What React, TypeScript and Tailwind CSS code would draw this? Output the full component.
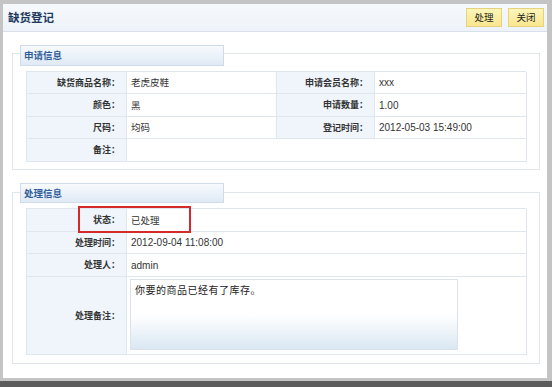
import React from 'react';

const cjk = "font-['Noto_Sans_CJK_SC',sans-serif]";
const latin = "font-['Liberation_Sans','Noto_Sans_CJK_SC',sans-serif]";

function Label({ children, className = '' }: { children: React.ReactNode; className?: string }) {
  return (
    <div
      className={`flex items-center justify-end pr-[6px] bg-[#eff5fb] border-r border-b border-[#dfe6ee] text-[9px] font-bold text-[#333] ${cjk} ${className}`}
    >
      {children}
    </div>
  );
}

function Value({ children, className = '' }: { children?: React.ReactNode; className?: string }) {
  return (
    <div
      className={`flex items-center pl-[4px] bg-white border-r border-b border-[#dfe6ee] text-[10px] text-[#333] ${latin} ${className}`}
    >
      {children}
    </div>
  );
}

function Section({
  title,
  legendOffset,
  className = '',
  children,
}: {
  title: string;
  legendOffset: string;
  className?: string;
  children: React.ReactNode;
}) {
  return (
    <div className={`ml-[9px] mr-[7px] border border-[#e1e6ec] bg-white px-[13px] pb-[7px] ${className}`}>
      <div
        className={`${legendOffset} -ml-[6px] w-[204px] flex items-center pl-[3px] border border-[#cfdbe8] bg-gradient-to-b from-[#f7fafd] to-[#e0eaf5] text-[9.5px] font-bold text-[#2f5e9a] ${cjk}`}
      >
        {title}
      </div>
      {children}
    </div>
  );
}

export default function App() {
  return (
    <div className="w-[552px] h-[387px] bg-[#c4c4c4] flex flex-col overflow-hidden">
      <div className="ml-[3px] mt-[4px] w-[544px] h-[374px] bg-white flex flex-col">
        {/* Header */}
        <div className="h-[28px] flex items-center justify-between pl-[5px] pr-[3px] bg-gradient-to-b from-[#f6f9fc] to-[#edf3f9] border-b border-[#d8e1eb]">
          <span className={`text-[11.5px] font-bold text-[#1e3a5f] ${cjk}`}>缺货登记</span>
          <div className="flex gap-[6px]">
            {['处理', '关闭'].map((t) => (
              <div
                key={t}
                className={`w-[36px] h-[19px] flex items-center justify-center border border-[#e6d27c] bg-gradient-to-b from-[#fdf6b8] to-[#f9e68e] text-[9.5px] text-[#222] ${cjk}`}
              >
                {t}
              </div>
            ))}
          </div>
        </div>

        {/* 申请信息 */}
        <Section title="申请信息" legendOffset="-mt-[9px] h-[21px]" className="mt-[21px]">
          <div className="mt-[5px] grid grid-cols-[100px_150px_98px_152px] grid-rows-[22px_23px_22px_23px] border-l border-t border-[#dfe6ee]">
            <Label>缺货商品名称：</Label>
            <Value className={cjk}>
              <span className="text-[9.5px]">老虎皮鞋</span>
            </Value>
            <Label>申请会员名称：</Label>
            <Value>xxx</Value>

            <Label>颜色：</Label>
            <Value className={cjk}>
              <span className="text-[9.5px]">黑</span>
            </Value>
            <Label>申请数量：</Label>
            <Value>1.00</Value>

            <Label>尺码：</Label>
            <Value className={cjk}>
              <span className="text-[9.5px]">均码</span>
            </Value>
            <Label>登记时间：</Label>
            <Value>2012-05-03 15:49:00</Value>

            <Label>备注：</Label>
            <Value className="col-span-3" />
          </div>
        </Section>

        {/* 处理信息 */}
        <Section title="处理信息" legendOffset="-mt-[10px] h-[20px]" className="mt-[22px] pb-[8px]">
          <div className="relative mt-[5px] grid grid-cols-[100px_400px] grid-rows-[23px_22px_23px_78px] border-l border-t border-[#dfe6ee]">
            <Label>状态：</Label>
            <Value className={cjk}>
              <span className="text-[9.5px]">已处理</span>
            </Value>
            <Label>处理时间：</Label>
            <Value>2012-09-04 11:08:00</Value>
            <Label>处理人：</Label>
            <Value>admin</Value>
            <Label>处理备注：</Label>
            <div className="bg-white border-r border-b border-[#dfe6ee] pl-[3px] pt-[2px]">
              <div
                className={`w-[328px] h-[71px] border border-[#dbe2ea] bg-gradient-to-b from-white from-50% to-[#dae7f3] pl-[4px] pt-[3px] text-[10px] leading-[14px] tracking-[0.5px] text-[#222] ${cjk}`}
              >
                你要的商品已经有了库存。
              </div>
            </div>

            {/* highlight annotation */}
            <div className="absolute left-[51px] -top-[3px] w-[113px] h-[27px] border-2 border-[#d42a2a] pointer-events-none" />
          </div>
        </Section>
      </div>
      <div className="mt-[3px] h-[6px] bg-[#5c5c5c]" />
    </div>
  );
}
